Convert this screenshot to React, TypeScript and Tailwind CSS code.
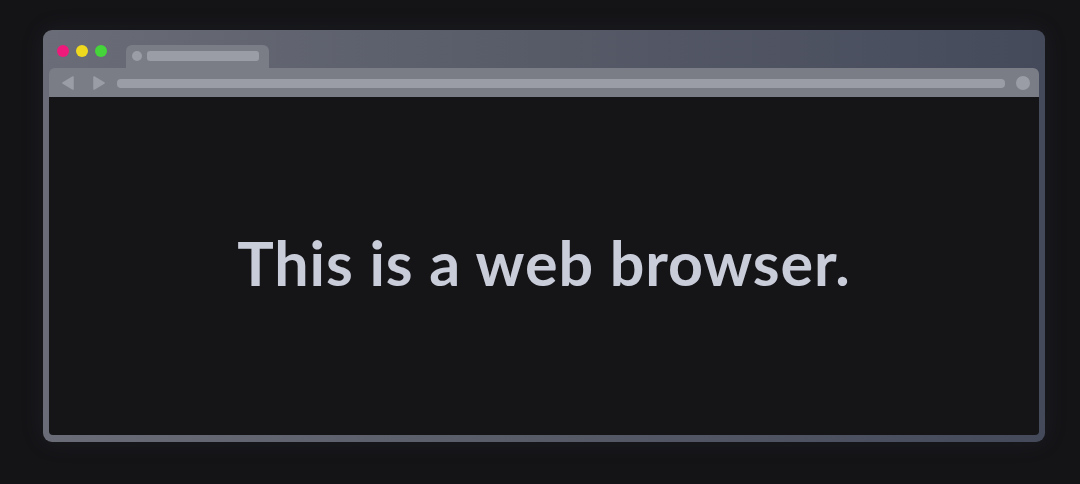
import React from "react";

export default function App() {
  return (
    <div className="w-[1080px] h-[484px] bg-[#141417] pt-[30px] pl-[43px] overflow-hidden">
      <div className="w-[1002px] h-[412px] rounded-[9px] bg-gradient-to-r from-[#6a6d77] via-[#575b68] to-[#454a5b] shadow-[0_0_24px_rgba(90,95,115,0.12)] flex flex-col px-[6px] pb-[7px]">
        {/* title bar */}
        <div className="h-[38px] flex items-end">
          <div className="flex items-center gap-[7px] pl-[8px] self-start mt-[15px]">
            <span className="w-[12px] h-[12px] rounded-full bg-[#ee1a7b]" />
            <span className="w-[12px] h-[12px] rounded-full bg-[#efd91f]" />
            <span className="w-[12px] h-[12px] rounded-full bg-[#45d43a]" />
          </div>
          <div className="ml-[19px] w-[143px] h-[23px] rounded-t-[6px] bg-[#7b7d86] flex items-center pl-[6px] gap-[5px] pb-[1px]">
            <span className="w-[10px] h-[10px] rounded-full bg-[#9b9da6]" />
            <span className="w-[112px] h-[10px] rounded-[3px] bg-[#9b9da6]" />
          </div>
        </div>
        {/* toolbar */}
        <div className="h-[29px] rounded-t-[6px] bg-[#7b7d86] flex items-center pl-[13px] pr-[9px]">
          <svg width="12" height="14" viewBox="0 0 12 14">
            <path d="M11 1 L1 7 L11 13 Z" fill="#9b9da6" stroke="#9b9da6" strokeWidth="1.5" strokeLinejoin="round" />
          </svg>
          <svg width="12" height="14" viewBox="0 0 12 14" className="ml-[19px]">
            <path d="M1 1 L11 7 L1 13 Z" fill="#9b9da6" stroke="#9b9da6" strokeWidth="1.5" strokeLinejoin="round" />
          </svg>
          <div className="ml-[12px] flex-1 h-[9px] rounded-[4px] bg-[#9b9da6] mt-[1px]" />
          <span className="ml-[11px] w-[14px] h-[14px] rounded-full bg-[#9b9da6]" />
        </div>
        {/* content */}
        <div className="flex-1 bg-[#151518] rounded-b-[4px] flex items-center justify-center">
          <h1
            className="text-[#c9ccd9] text-[61px] font-bold tracking-[0.9px] pb-[6px]"
            style={{ fontFamily: "Lato, 'Open Sans', sans-serif" }}
          >
            This is a web browser.
          </h1>
        </div>
      </div>
    </div>
  );
}
